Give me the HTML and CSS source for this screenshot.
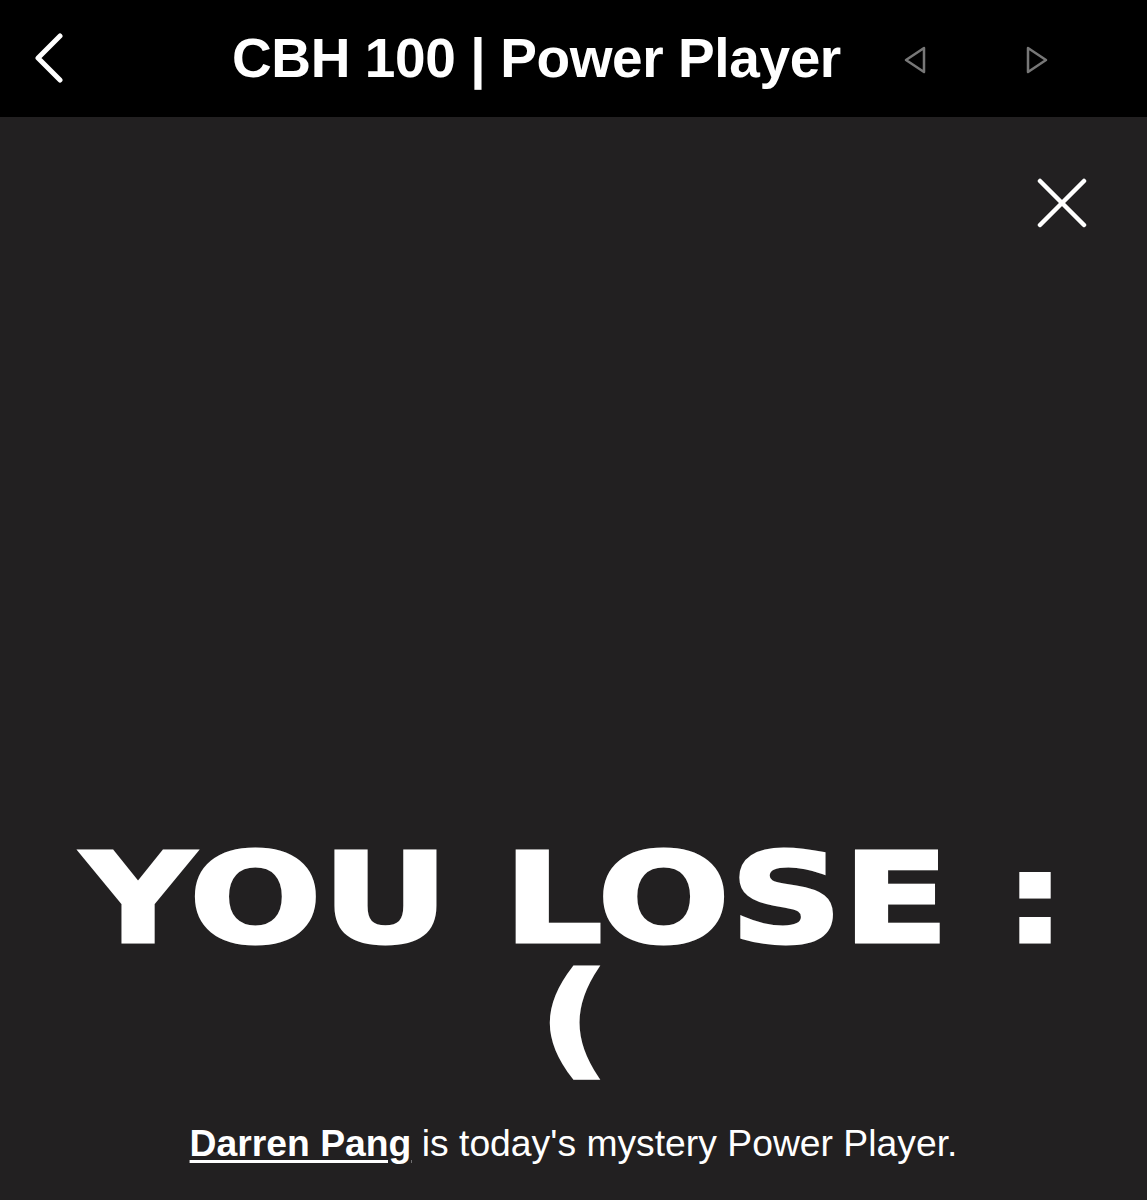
FILE: index.html
```html
<!DOCTYPE html>
<html lang="en">
<head>
  <meta charset="UTF-8">
  <title>CBH 100 | Power Player</title>
  <link rel="stylesheet" href="styles.css">
</head>
<body>

  <header class="topbar">
    <button class="back" aria-label="Back">
      <svg width="40" height="56" viewBox="0 0 40 56">
        <polyline points="25,3 3,25 25,47" fill="none" stroke="#fff" stroke-width="5" stroke-linecap="round" stroke-linejoin="round"/>
      </svg>
    </button>
    <h1 class="title">CBH 100 | Power Player</h1>
    <div class="nav">
      <button class="arrow" aria-label="Previous">
        <svg width="24" height="28" viewBox="0 0 24 28">
          <polygon points="21,2 3,14 21,26" fill="none" stroke="#777" stroke-width="2.5" stroke-linejoin="round"/>
        </svg>
      </button>
      <button class="arrow" aria-label="Next">
        <svg width="24" height="28" viewBox="0 0 24 28">
          <polygon points="4,2 22,14 4,26" fill="none" stroke="#777" stroke-width="2.5" stroke-linejoin="round"/>
        </svg>
      </button>
    </div>
  </header>

  <main class="result">
    <div class="close-row">
      <button class="close" aria-label="Close">
        <svg width="50" height="50" viewBox="0 0 50 50">
          <line x1="3" y1="3" x2="47" y2="47" stroke="#fff" stroke-width="4.5" stroke-linecap="round"/>
          <line x1="47" y1="3" x2="3" y2="47" stroke="#fff" stroke-width="4.5" stroke-linecap="round"/>
        </svg>
      </button>
    </div>

    <h2 class="verdict"><span>YOU LOSE :<br>(</span></h2>

    <p class="answer"><a href="#">Darren Pang</a> is today's mystery Power Player.</p>
  </main>

</body>
</html>
```

FILE: styles.css
```css
html, body {
  margin: 0;
  height: 100%;
}

body {
  display: flex;
  flex-direction: column;
  background: #222021;
  color: white;
  font-family: 'Liberation Sans', Arial, sans-serif;
}

button {
  background: none;
  border: none;
  padding: 0;
  cursor: pointer;
  display: flex;
}

.topbar {
  height: 117px;
  flex-shrink: 0;
  background: #000;
  display: flex;
  align-items: center;
}

.back {
  margin-left: 35px;
  margin-top: 4px;
}

.title {
  margin: 0 0 2px 157px;
  font-size: 55px;
  font-weight: bold;
  letter-spacing: -0.4px;
}

.nav {
  display: flex;
  gap: 97px;
  margin-left: 62px;
  margin-top: 2px;
}

.result {
  flex: 1;
  display: flex;
  flex-direction: column;
}

.close-row {
  display: flex;
  justify-content: flex-end;
  padding: 61px 60px 0 0;
}

/* heavy, extended headline */
.verdict {
  margin: auto 0 0;
  text-align: center;
  font-family: 'DejaVu Sans', sans-serif;
  font-weight: bold;
  font-size: 125px;
  line-height: 120px;
  -webkit-text-stroke: 3px white;
}

.verdict span {
  display: inline-block;
  transform: scaleX(1.25);
}

.answer {
  margin: 43px 0 35px;
  text-align: center;
  font-size: 37.3px;
}

.answer a {
  color: white;
  font-weight: bold;
  text-decoration: underline;
  text-underline-offset: 4px;
}
```
